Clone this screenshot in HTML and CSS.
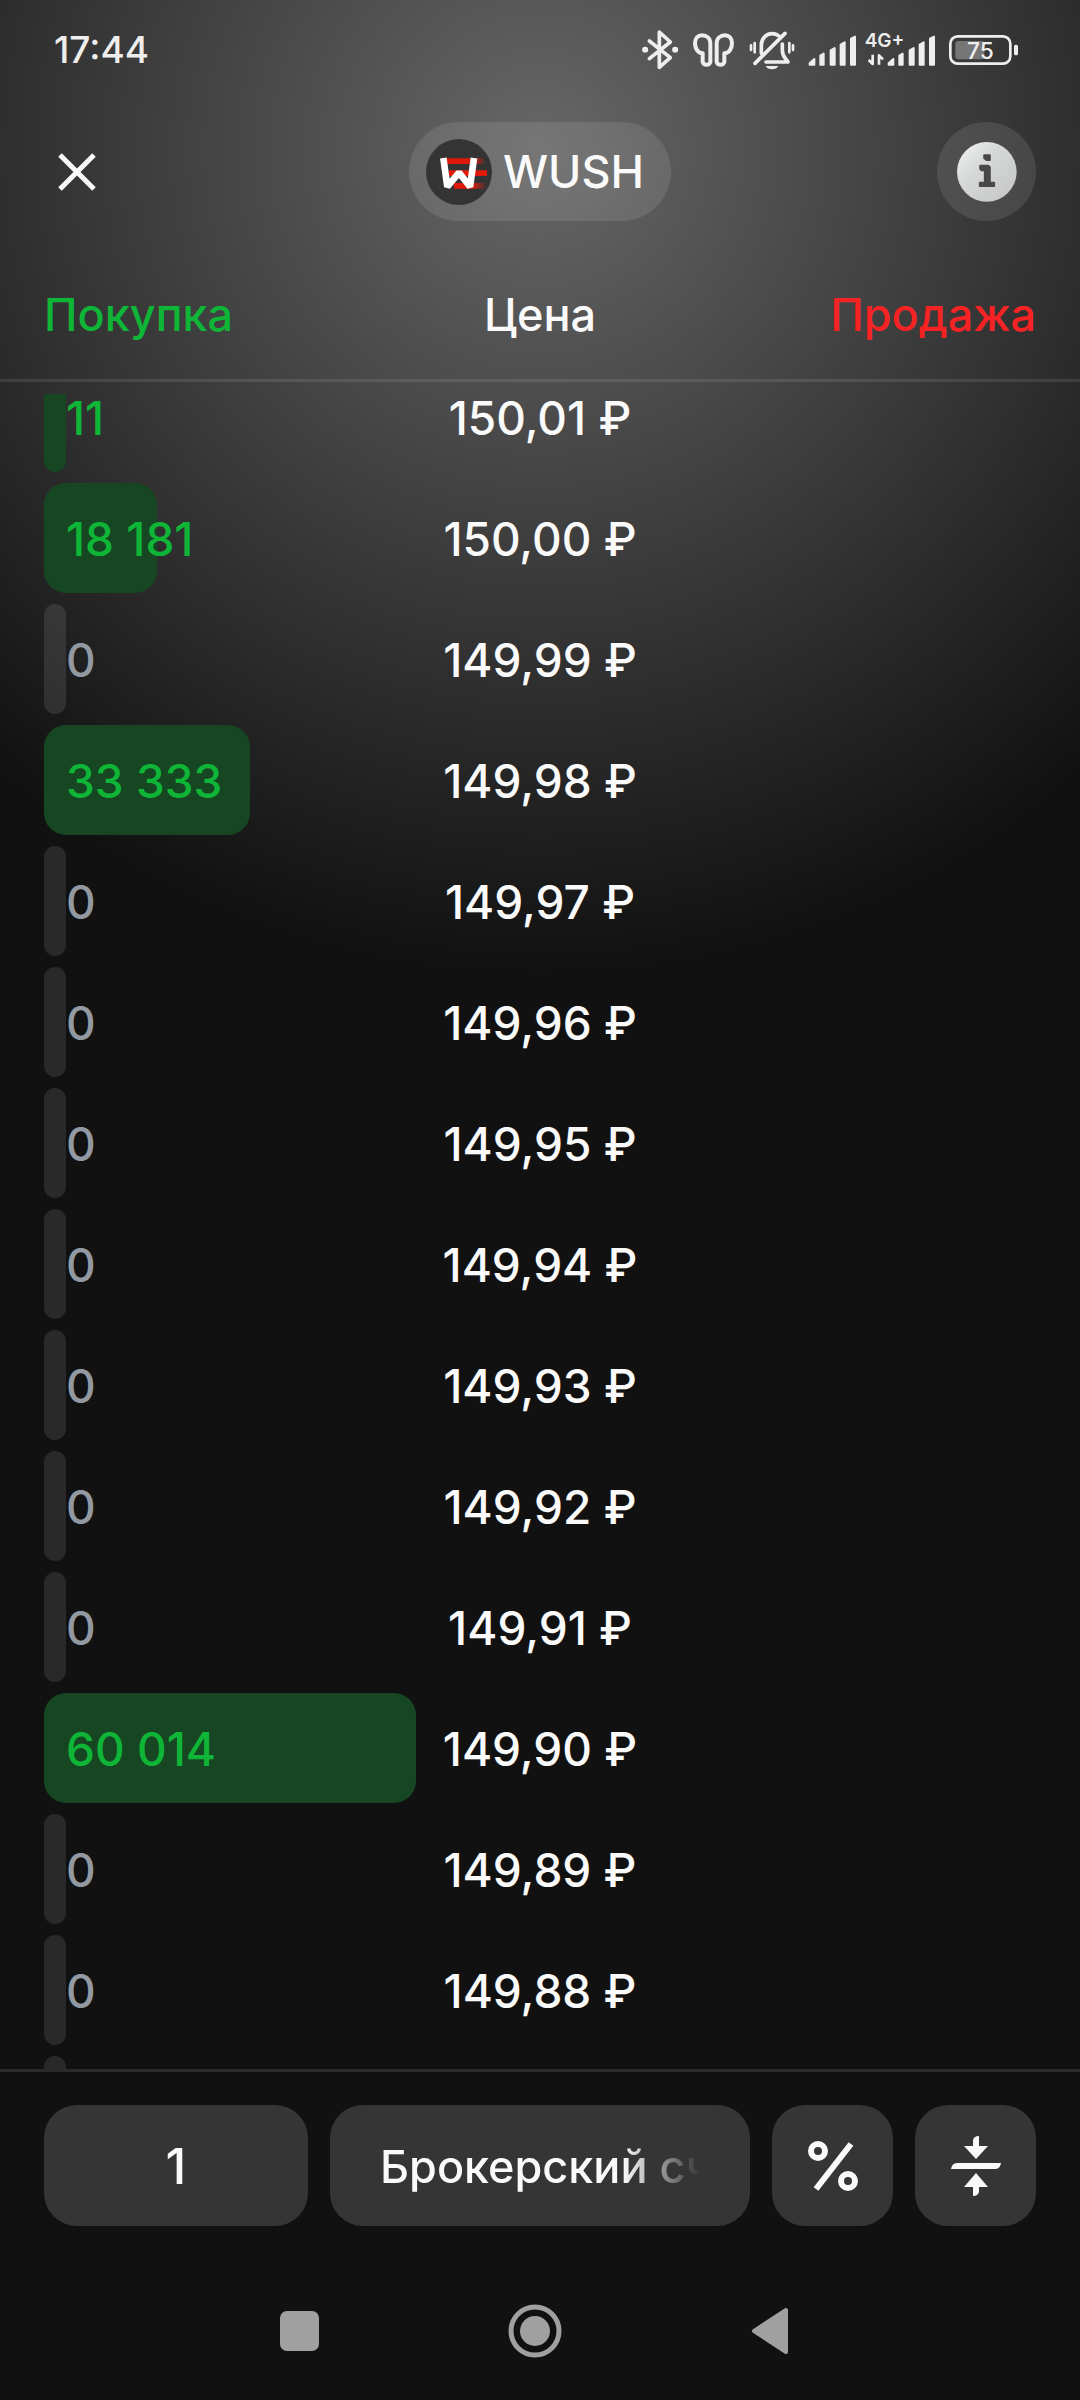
FILE: index.html
```html
<!DOCTYPE html>
<html lang="ru">
<head>
	<meta charset="UTF-8">
	<meta name="viewport" content="width=device-width, initial-scale=1">
	<title>WUSH</title>
	<link rel="stylesheet" href="styles.css">
</head>
<body>

<div class="status">
	<span class="time">17:44</span>
	<div class="status-icons">
		<!-- bluetooth -->
		<svg width="38" height="42" viewBox="63 57 114 126" fill="none" stroke="#eee" stroke-width="11" stroke-linecap="round" stroke-linejoin="round">
			<path d="M88 93L151 143L118 172V66L151 96L88 146"/>
			<path d="M75 119h1M165 119h1" stroke-width="17"/>
		</svg>
		<!-- earbuds -->
		<svg width="45" height="42" viewBox="213 57 135 126" fill="none" stroke="#eee" stroke-width="12" stroke-linejoin="round">
			<path d="M246 76c14 0 25 9 25 24v56a12 12 0 0 1-23 0v-26c-14-1-23-14-23-30c0-15 9-24 21-24z"/>
			<path d="M315 76c-14 0-25 9-25 24v56a12 12 0 0 0 23 0v-26c14-1 23-14 23-30c0-15-9-24-21-24z"/>
		</svg>
		<!-- muted bell -->
		<svg width="48" height="42" viewBox="384 57 144 126" fill="none" stroke="#eee" stroke-width="11" stroke-linecap="round" stroke-linejoin="round">
			<path d="M424 130v-24c0-20 14-35 32-35c8 0 14 2 20 6"/>
			<path d="M487 102v18c0 14 4 20 10 27l7 9h-66"/>
			<path d="M495 70L405 160"/>
			<path d="M393 106v14M404 99v28M508 99v28M519 106v14" stroke-width="8"/>
			<path d="M437 168h38q-6 10-19 10t-19-10z" fill="#eee" stroke="none"/>
		</svg>
		<!-- both sims -->
		<svg width="128" height="42" viewBox="564 57 384 126" fill="#eee">
			<g id="bars" stroke="#eee" stroke-width="6" stroke-linejoin="round">
				<path d="M569 160L583 147V164H569z"/>
				<path d="M601 137L611 131V164H601z"/>
				<path d="M632 121L644 114V164H632z"/>
				<path d="M662 104L674 97V164H662z"/>
				<path d="M693 86L705 80V164H693z"/>
			</g>
			<use href="#bars" x="237"/>
			<text class="net" x="734" y="112">4G+</text>
			<path d="M758 134v28l-12-12M777 164v-28l12 12" fill="none" stroke="#eee" stroke-width="8" stroke-linejoin="round"/>
		</svg>
		<!-- battery -->
		<svg width="71" height="42" viewBox="984 57 213 126">
			<rect x="1006" y="93" width="87" height="55" rx="9" fill="#767676"/>
			<rect x="991" y="79" width="180" height="82" rx="22" fill="none" stroke="#eee" stroke-width="8"/>
			<rect x="1182" y="104" width="12" height="32" rx="5" fill="#eee"/>
			<text class="charge" x="1081" y="147">75</text>
		</svg>
	</div>
</div>

<header class="topbar">
	<button class="close" type="button" aria-label="Закрыть">
		<svg width="38" height="38" viewBox="0 0 38 38"><path d="M2 2L36 36M36 2L2 36" stroke="#fafafa" stroke-width="5"/></svg>
	</button>
	<button class="ticker" type="button">
		<svg width="66" height="66" viewBox="141 87 198 198">
			<defs>
				<linearGradient id="tail" gradientUnits="userSpaceOnUse" x1="280" x2="322" y1="0" y2="0">
					<stop offset="0" stop-color="#e01a0b"/>
					<stop offset="1" stop-color="#e01a0b" stop-opacity="0"/>
				</linearGradient>
			</defs>
			<circle cx="240" cy="186" r="99" fill="#343434"/>
			<path d="M200 145h116v17H200zM225 219h97v17h-97z" fill="url(#tail)"/>
			<path d="M210 181h114v17H210z" fill="#e01a0b"/>
			<path d="M193 144L205 230L240 188L273 230L285 144" fill="none" stroke="#fff" stroke-width="20" stroke-linejoin="bevel"/>
		</svg>
		<span>WUSH</span>
	</button>
	<button class="info" type="button" aria-label="Информация">
		<svg width="60" height="60" viewBox="170 125 181 181">
			<defs>
				<linearGradient id="shine" x1="0" y1="0" x2="1" y2="1">
					<stop offset="0" stop-color="#f2f2f2"/>
					<stop offset=".4" stop-color="#d6d8d8"/>
					<stop offset="1" stop-color="#c4c4c4"/>
				</linearGradient>
			</defs>
			<circle cx="260" cy="215" r="90" fill="url(#shine)"/>
			<g fill="#484848" stroke="#484848" stroke-width="6" stroke-linejoin="round">
				<path d="M252 165h17v14h-10l-7-6z"/>
				<path d="M240 197h25l4 4v47h13v10h-43v-10h15v-38h-10l-4-4z"/>
			</g>
		</svg>
	</button>
</header>

<table class="book">
	<thead>
		<tr>
			<th class="buy">Покупка</th>
			<th class="price">Цена</th>
			<th class="sell">Продажа</th>
		</tr>
	</thead>
	<tbody>
		<tr><td class="buy"><i style="width: 0%"></i><b>11</b></td><td class="price">150,01 ₽</td><td></td></tr>
		<tr><td class="buy"><i style="width: 30.3%"></i><b>18 181</b></td><td class="price">150,00 ₽</td><td></td></tr>
		<tr class="empty"><td class="buy"><i></i><b>0</b></td><td class="price">149,99 ₽</td><td></td></tr>
		<tr><td class="buy"><i style="width: 55.5%"></i><b>33 333</b></td><td class="price">149,98 ₽</td><td></td></tr>
		<tr class="empty"><td class="buy"><i></i><b>0</b></td><td class="price">149,97 ₽</td><td></td></tr>
		<tr class="empty"><td class="buy"><i></i><b>0</b></td><td class="price">149,96 ₽</td><td></td></tr>
		<tr class="empty"><td class="buy"><i></i><b>0</b></td><td class="price">149,95 ₽</td><td></td></tr>
		<tr class="empty"><td class="buy"><i></i><b>0</b></td><td class="price">149,94 ₽</td><td></td></tr>
		<tr class="empty"><td class="buy"><i></i><b>0</b></td><td class="price">149,93 ₽</td><td></td></tr>
		<tr class="empty"><td class="buy"><i></i><b>0</b></td><td class="price">149,92 ₽</td><td></td></tr>
		<tr class="empty"><td class="buy"><i></i><b>0</b></td><td class="price">149,91 ₽</td><td></td></tr>
		<tr><td class="buy"><i style="width: 100%"></i><b>60 014</b></td><td class="price">149,90 ₽</td><td></td></tr>
		<tr class="empty"><td class="buy"><i></i><b>0</b></td><td class="price">149,89 ₽</td><td></td></tr>
		<tr class="empty"><td class="buy"><i></i><b>0</b></td><td class="price">149,88 ₽</td><td></td></tr>
		<tr class="empty"><td class="buy"><i></i></td><td class="price"></td><td></td></tr>
	</tbody>
</table>

<footer class="order">
	<input class="lots" type="text" inputmode="numeric" value="1" aria-label="Количество лотов">
	<button class="account" type="button"><span>Брокерский счёт</span></button>
	<button class="square" type="button" aria-label="Проценты">
		<svg width="60" height="60" viewBox="-30 -30 60 60" fill="none" stroke="#fafafa">
			<circle cx="-15" cy="-15" r="7" stroke-width="6"/>
			<circle cx="15" cy="15" r="7" stroke-width="6"/>
			<path d="M18 -22L-17 23" stroke-width="6"/>
		</svg>
	</button>
	<button class="square" type="button" aria-label="К центру стакана">
		<svg width="60" height="60" viewBox="-30 -30 60 60" fill="#fafafa">
			<path d="M-25 3q1 -6 6 -6h44q-1 6 -6 6z"/>
			<path d="M-3 -20v-6q1 -4 6 -4v10h9L0 -7L-12 -20z"/>
			<path d="M3 21v5q-1 4 -6 4v-9h-9L0 7L12 21z"/>
		</svg>
	</button>
</footer>

<nav class="system">
	<button type="button" aria-label="Недавние"><svg width="54" height="54" viewBox="0 0 54 54"><rect x="7" y="7" width="39" height="40" rx="7"/></svg></button>
	<button type="button" aria-label="Домой"><svg width="54" height="54" viewBox="0 0 54 54"><circle cx="27" cy="27" r="15"/><circle cx="27" cy="27" r="24" fill="none" stroke="#a0a0a0" stroke-width="5"/></svg></button>
	<button type="button" aria-label="Назад"><svg width="54" height="54" viewBox="0 0 54 54"><path d="M11 27L43 6V48z" stroke="#a0a0a0" stroke-width="4" stroke-linejoin="round"/></svg></button>
</nav>

</body>
</html>
```
FILE: styles.css
```css
*{margin: 0;padding: 0;box-sizing: border-box;}
body{
	display: flex;
	flex-direction: column;
	height: 100vh;
	background: #111 radial-gradient(circle 820px at 50% 150px, #676767, #111);
	color: #fafafa;
	font-family: Inter, "Liberation Sans", sans-serif;
	font-size: 45px;
	font-weight: 500;
	line-height: 56px;
}
button,input{
	border: 0;
	background: none;
	color: inherit;
	font: inherit;
}
button{cursor: pointer;}
svg{display: block;flex: none;}

/* status bar */
.status{
	display: flex;
	justify-content: space-between;
	align-items: center;
	height: 100px;
	padding: 0 61px 0 54px;
	color: #eee;
}
.time{font-size: 37px;}
.status-icons{
	display: flex;
	gap: 12px;
}
.net{font-size: 57px;font-weight: 600;}
.charge{font-size: 68px;fill: #eee;text-anchor: middle;}

/* top bar */
.topbar{
	display: grid;
	grid-template-columns: 1fr auto 1fr;
	align-items: center;
	padding: 22px 44px 0;
}
.close{
	display: flex;
	justify-content: center;
	align-items: center;
	width: 66px;
	height: 66px;
}
.ticker{
	display: flex;
	align-items: center;
	gap: 11px;
	height: 99px;
	padding: 0 27px 0 17px;
	border-radius: 50px;
	background: rgba(255,255,255,0.1);
}
.info{
	display: flex;
	justify-content: center;
	align-items: center;
	justify-self: end;
	width: 99px;
	height: 99px;
	border-radius: 50%;
	background: rgba(255,255,255,0.1);
}

/* order book */
.book{
	display: flex;
	flex-direction: column;
	flex: 1;
	min-height: 0;
}
.book tr{
	display: grid;
	grid-template-columns: 3fr 2fr 3fr;
	align-items: center;
	padding: 0 44px;
}
.book thead{
	display: block;
	padding: 66px 0 36px;
	border-bottom: 3px solid rgba(255,255,255,0.1);
}
.book th{
	font-weight: 500;
	text-align: left;
}
.book .price{text-align: center;white-space: nowrap;}
.book .sell{color: #f52323;text-align: right;}
.book .buy{color: #0fb537;}
.book tbody{
	display: block;
	flex: 1;
	min-height: 0;
	margin-top: 12px;
	overflow: hidden;
	font-size: 46px;
}
.book tbody tr{margin-bottom: 11px;}
/* list is scrolled a little */
.book tbody tr:first-child{margin-top: -32px;}
.book td.price{padding-top: 2px;}
/* bar and number share one cell */
.book td.buy{
	display: grid;
	align-items: center;
	height: 110px;
}
.book td i,
.book td b{
	grid-area: 1 / 1;
}
.book td i{
	min-width: 22px;
	height: 110px;
	border-radius: 22px;
	background: #164722;
}
.book td b{
	padding: 2px 0 0 22px;
	font-weight: 500;
}
.book .empty i{
	width: 22px;
	background: rgba(255,255,255,0.1);
}
.book .empty b{color: #9299a2;}

/* bottom controls */
.order{
	display: grid;
	grid-template-columns: 264fr 420fr 121px 121px;
	gap: 22px;
	padding: 33px 44px 0;
	border-top: 3px solid #2a2a2a;
}
.order input,
.order button{
	min-width: 0;
	height: 121px;
	border-radius: 33px;
	background: #353535;
}
.order .lots{
	text-align: center;
	font-size: 50px;
}
.order .account{padding: 2px 50px 0;}
.account span{
	display: block;
	overflow: hidden;
	text-align: left;
	white-space: nowrap;
	-webkit-mask-image: linear-gradient(90deg, #000 76%, transparent);
	mask-image: linear-gradient(90deg, #000 76%, transparent);
}
.square{
	display: flex;
	justify-content: center;
	align-items: center;
}

/* android buttons */
.system{
	display: flex;
	justify-content: center;
	gap: 181px;
	padding: 78px 11px 42px 0;
}
.system svg{fill: #a0a0a0;}
```
